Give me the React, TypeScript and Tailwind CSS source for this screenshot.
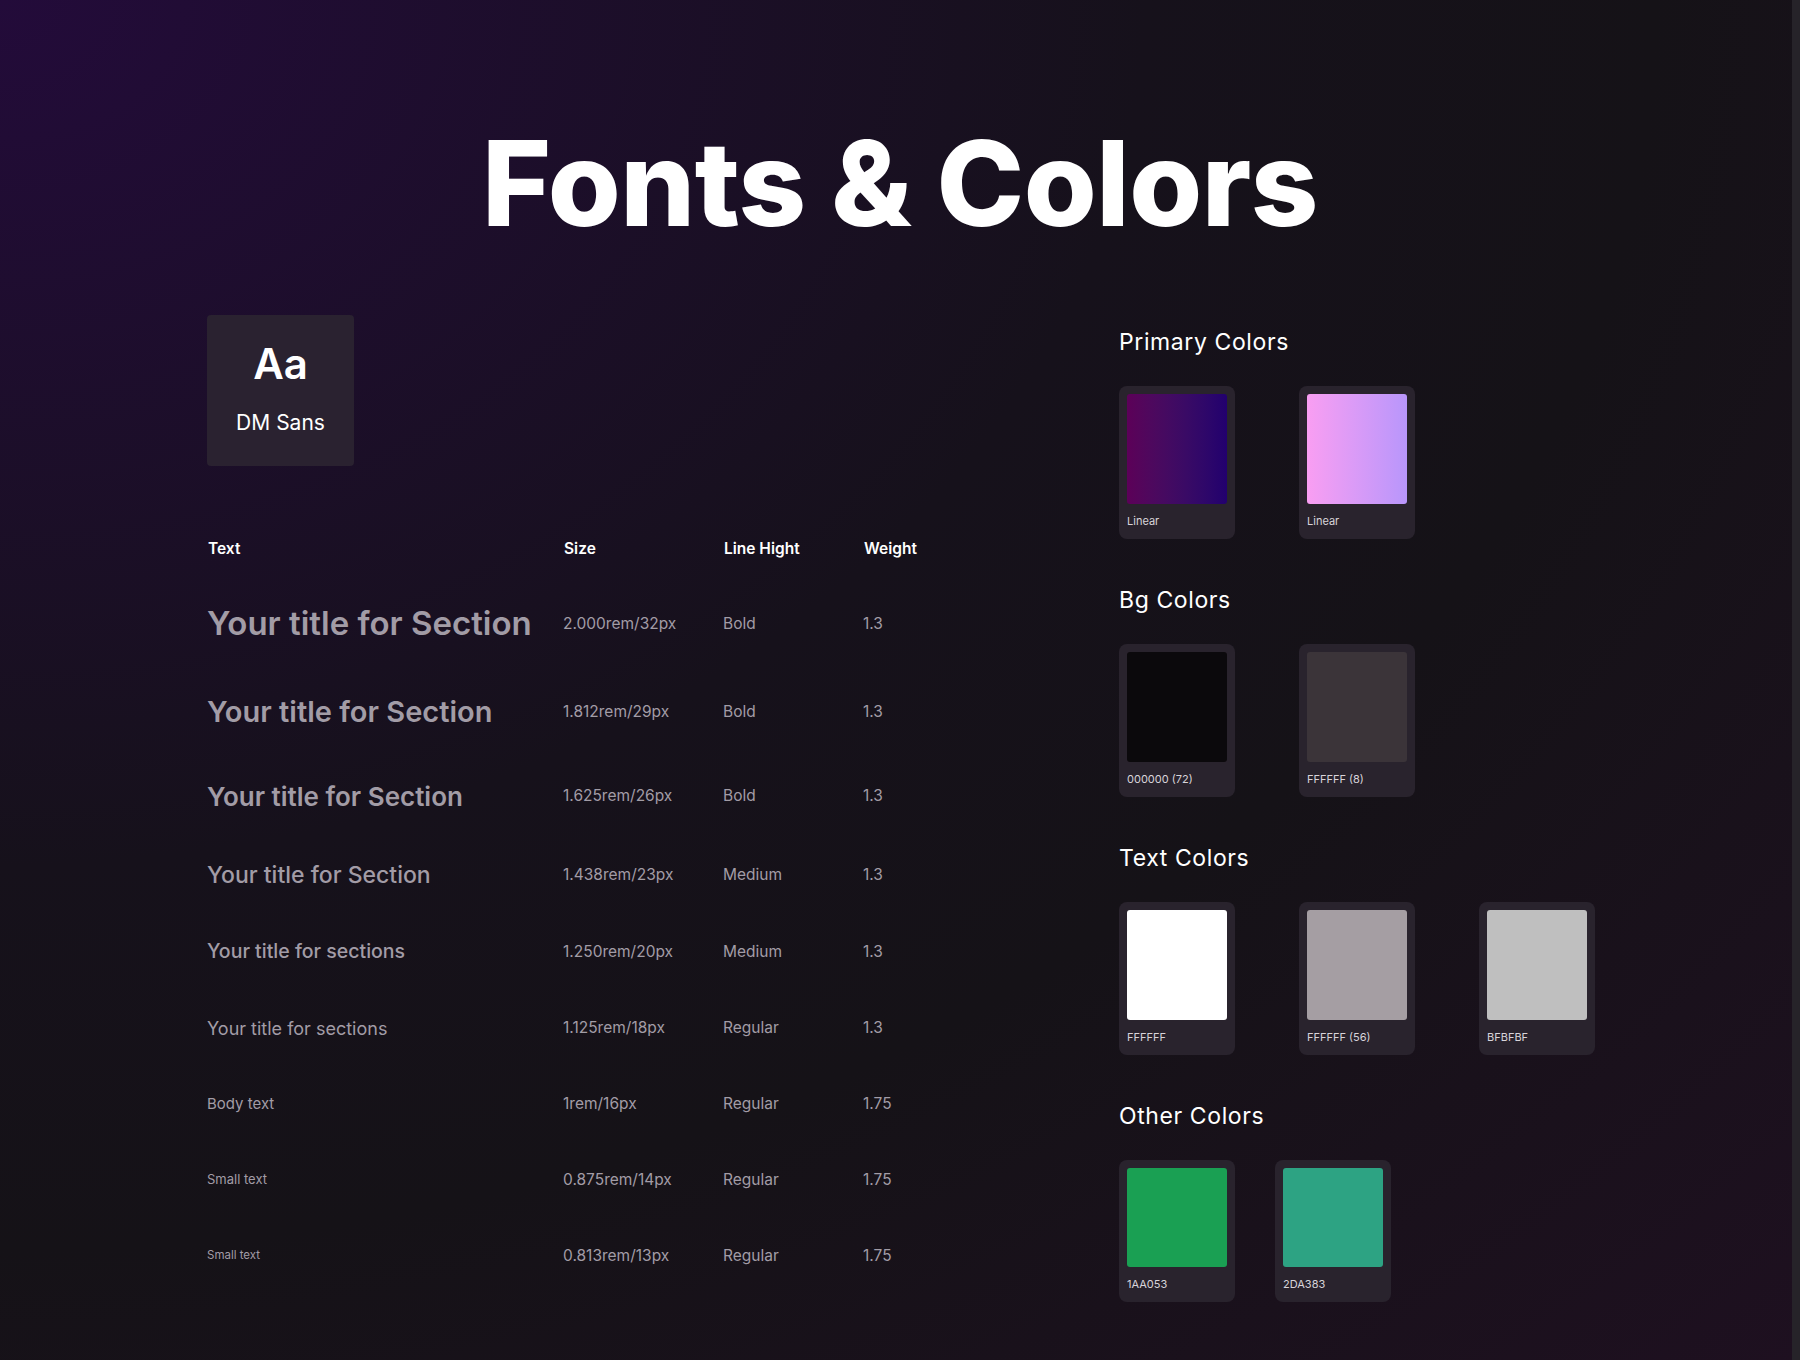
const rows = [
  { t: "Your title for Section", cls: "text-[33px] font-semibold h-[88px]", s: "2.000rem/32px", w: "Bold", l: "1.3" },
  { t: "Your title for Section", cls: "text-[29px] font-semibold h-[88px]", s: "1.812rem/29px", w: "Bold", l: "1.3" },
  { t: "Your title for Section", cls: "text-[26px] font-semibold h-[80px]", s: "1.625rem/26px", w: "Bold", l: "1.3" },
  { t: "Your title for Section", cls: "text-[23px] font-medium h-[78px]", s: "1.438rem/23px", w: "Medium", l: "1.3" },
  { t: "Your title for sections", cls: "text-[19.5px] font-medium h-[76px]", s: "1.250rem/20px", w: "Medium", l: "1.3" },
  { t: "Your title for sections", cls: "text-[18px] h-[76px]", s: "1.125rem/18px", w: "Regular", l: "1.3" },
  { t: "Body text", cls: "text-[15px] h-[76px]", s: "1rem/16px", w: "Regular", l: "1.75" },
  { t: "Small text", cls: "text-[13px] h-[76px]", s: "0.875rem/14px", w: "Regular", l: "1.75" },
  { t: "Small text", cls: "text-[11.5px] h-[76px]", s: "0.813rem/13px", w: "Regular", l: "1.75" },
];

function Swatch({ fill, label, short }: { fill: string; label: string; short?: boolean }) {
  return (
    <div className="w-[116px] rounded-[8px] bg-[#29232d] p-2 pb-0 flex flex-col">
      <div className={`w-[100px] ${short ? "h-[99px]" : "h-[110px]"} rounded-[3px] ${fill}`} />
      <div className="h-[35px] flex items-center text-[11px] text-[#d8d4da]">{label}</div>
    </div>
  );
}

function Section({ title, children, gap = "gap-[64px]" }: { title: string; children: React.ReactNode; gap?: string }) {
  return (
    <div className="flex flex-col">
      <div className="text-[23px] tracking-[0.6px] text-white h-[48px] flex items-center">{title}</div>
      <div className={`flex ${gap} mt-[20px]`}>{children}</div>
    </div>
  );
}

export default function App() {
  return (
    <div
      className="w-[1800px] h-[1360px] overflow-hidden relative bg-[radial-gradient(ellipse_at_0%_0%,#230b3a_0%,#16111b_45%,#151217_65%,#1e1020_100%)] text-white"
      style={{ fontFamily: "Inter, 'Noto Sans', sans-serif" }}
    >
      <div className="absolute top-0 right-0 w-[8px] h-full bg-[#262329]" />
      <h1 className="pt-[124px] text-center text-[118px] font-extrabold leading-none tracking-[-0.5px]">
        Fonts &amp; Colors
      </h1>
      <div className="flex mt-[73px] pl-[207px]">
        <div className="w-[912px] flex flex-col">
          <div className="w-[147px] h-[151px] rounded-[4px] bg-[#2a2230] flex flex-col items-center justify-center">
            <div className="text-[42px] font-semibold leading-none">Aa</div>
            <div className="text-[21px] mt-[22px]">DM Sans</div>
          </div>
          <div className="mt-[70px] flex h-[26px] items-center text-[15.5px] font-semibold">
            <div className="w-[357px] pl-[1px]">Text</div>
            <div className="w-[160px]">Size</div>
            <div className="w-[140px]">Line Hight</div>
            <div>Weight</div>
          </div>
          <div className="mt-[18px] flex flex-col">
            {rows.map((r, i) => (
              <div key={i} className="flex items-center text-[#a29ca6]">
                <div className={`w-[356px] flex items-center whitespace-nowrap ${r.cls}`}>{r.t}</div>
                <div className="w-[160px] text-[15.5px]">{r.s}</div>
                <div className="w-[140px] text-[15.5px]">{r.w}</div>
                <div className="text-[15.5px]">{r.l}</div>
              </div>
            ))}
          </div>
        </div>
        <div className="flex flex-col gap-[37px] mt-[3px]">
          <Section title="Primary Colors">
            <Swatch fill="bg-gradient-to-r from-[#5c0058] to-[#22006e]" label="Linear" />
            <Swatch fill="bg-gradient-to-r from-[#f99ef2] to-[#b896fb]" label="Linear" />
          </Section>
          <Section title="Bg Colors">
            <Swatch fill="bg-[#0b090c]" label="000000 (72)" />
            <Swatch fill="bg-[#3b3439]" label="FFFFFF (8)" />
          </Section>
          <Section title="Text Colors">
            <Swatch fill="bg-white" label="FFFFFF" />
            <Swatch fill="bg-[#a59ea3]" label="FFFFFF (56)" />
            <Swatch fill="bg-[#bfbfbf]" label="BFBFBF" />
          </Section>
          <Section title="Other Colors" gap="gap-[40px]">
            <Swatch fill="bg-[#1aa053]" label="1AA053" short />
            <Swatch fill="bg-[#2da383]" label="2DA383" short />
          </Section>
        </div>
      </div>
    </div>
  );
}
